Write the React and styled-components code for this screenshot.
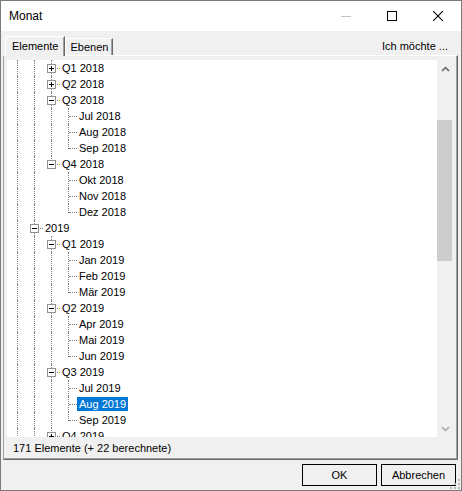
import styled, { createGlobalStyle } from "styled-components";

const UI = `"Liberation Sans", Arial, sans-serif`;

const GlobalStyle = createGlobalStyle`
  * { box-sizing: border-box; }
  body { margin: 0; background: #fff; font-family: ${UI}; }
`;

const Window = styled.div`
  position: relative;
  width: 462px;
  height: 491px;
  border: 1px solid #7a7a7a;
  background: #f0f0f0;
  display: flex;
  flex-direction: column;
  font-family: ${UI};
  color: #000;
  overflow: hidden;
`;

const TitleBar = styled.div`
  height: 30px;
  flex: none;
  background: #fff;
  display: flex;
  align-items: center;
`;

const Title = styled.div`
  flex: 1;
  padding-left: 8px;
  font-size: 12px;
`;

const CaptionButton = styled.div`
  width: 46px;
  height: 30px;
  display: flex;
  align-items: center;
  justify-content: center;
`;

const Body = styled.div`
  flex: 1;
  display: flex;
  flex-direction: column;
  padding: 5px 3px 0 2px;
  min-height: 0;
`;

const TabStrip = styled.div`
  height: 19px;
  flex: none;
  display: flex;
  align-items: flex-end;
  padding-left: 2px;
  font-size: 11px;
`;

const Tab = styled.div`
  position: relative;
  z-index: 1;
  height: ${(p) => (p.$active ? "20px" : "17px")};
  margin-bottom: ${(p) => (p.$active ? "-1px" : "0")};
  padding: ${(p) => (p.$active ? "3px 6px 0" : "2px 4px 0")};
  background: #f0f0f0;
  border-top: 1px solid #fff;
  border-left: 1px solid #fff;
  border-right: 1px solid #696969;
  box-shadow: inset -1px 0 #a0a0a0;
  line-height: 13px;
`;

const Action = styled.div`
  margin-left: auto;
  align-self: center;
  padding-right: 10px;
  padding-top: 1px;
`;

const Panel = styled.div`
  flex: 1;
  display: flex;
  flex-direction: column;
  padding: 4px 3px 0 3px;
  border-top: 1px solid #fff;
  border-left: 1px solid #a0a0a0;
  border-right: 1px solid #696969;
  border-bottom: 1px solid #696969;
  box-shadow: inset -1px -1px #a0a0a0;
  min-height: 0;
`;

const TreeBox = styled.div`
  height: 377px;
  flex: none;
  display: flex;
`;

const Tree = styled.div`
  flex: 1;
  background: #fff;
  overflow: hidden;
  padding-left: 2px;
`;

const Row = styled.div`
  display: flex;
  height: 16px;
  font-size: 11px;
`;

const Cell = styled.span`
  position: relative;
  width: 17px;
  height: 16px;
  flex: none;
  &::before {
    content: "";
    position: absolute;
    left: 8px;
    top: 0;
    height: ${(p) => (p.$v === "full" ? "16px" : p.$v === "half" ? "9px" : "0")};
    border-left: ${(p) => (p.$v === "none" ? "none" : "1px dotted #808080")};
  }
  &::after {
    content: "";
    position: absolute;
    left: 9px;
    top: 8px;
    width: 8px;
    border-top: ${(p) => (p.$h ? "1px dotted #808080" : "none")};
  }
`;

const Expander = styled.span`
  position: absolute;
  left: 4px;
  top: 4px;
  width: 9px;
  height: 9px;
  border: 1px solid #919191;
  background: #fff;
  z-index: 1;
  &::before {
    content: "";
    position: absolute;
    left: 1px;
    top: 3px;
    width: 5px;
    height: 1px;
    background: #000;
  }
  &::after {
    content: "";
    position: absolute;
    left: 3px;
    top: 1px;
    width: 1px;
    height: 5px;
    background: #000;
    display: ${(p) => (p.$open ? "none" : "block")};
  }
`;

const Label = styled.span`
  margin-top: 1px;
  height: 14px;
  line-height: 14px;
  padding: 0 2px;
  white-space: nowrap;
  background: ${(p) => (p.$selected ? "#0078d7" : "transparent")};
  color: ${(p) => (p.$selected ? "#fff" : "#000")};
`;

const ScrollBar = styled.div`
  width: 17px;
  flex: none;
  background: #f0f0f0;
  display: flex;
  flex-direction: column;
`;

const ScrollArrow = styled.div`
  height: 17px;
  flex: none;
  display: flex;
  align-items: center;
  justify-content: center;
`;

const ScrollTrack = styled.div`
  flex: 1;
  padding-top: 43px;
`;

const ScrollThumb = styled.div`
  width: 15px;
  height: 141px;
  background: #cdcdcd;
`;

const Status = styled.div`
  flex: 1;
  display: flex;
  align-items: center;
  padding-left: 6px;
  font-size: 11px;
`;

const Footer = styled.div`
  position: relative;
  height: 30px;
  flex: none;
  display: flex;
  justify-content: flex-end;
  gap: 4px;
  padding: 4px 5px 0 0;
`;

const Button = styled.button`
  width: 75px;
  height: 22px;
  border: 1px solid #000;
  background: #f0f0f0;
  font-family: ${UI};
  font-size: 11px;
  color: #000;
  padding: 0;
`;

const Grip = styled.svg`
  position: absolute;
  right: 1px;
  bottom: 1px;
`;

const y = (label) => ({ label, depth: 1, last: false, box: "open", guides: [true] });
const q = (label, last, box) => ({ label, depth: 2, last, box, guides: [true, true] });
const m = (label, last, qLast, selected) => ({
  label,
  depth: 3,
  last,
  guides: [true, true, !qLast],
  selected,
});

const rows = [
  q("Q1 2018", false, "closed"),
  q("Q2 2018", false, "closed"),
  q("Q3 2018", false, "open"),
  m("Jul 2018", false, false),
  m("Aug 2018", false, false),
  m("Sep 2018", true, false),
  q("Q4 2018", true, "open"),
  m("Okt 2018", false, true),
  m("Nov 2018", false, true),
  m("Dez 2018", true, true),
  y("2019"),
  q("Q1 2019", false, "open"),
  m("Jan 2019", false, false),
  m("Feb 2019", false, false),
  m("Mär 2019", true, false),
  q("Q2 2019", false, "open"),
  m("Apr 2019", false, false),
  m("Mai 2019", false, false),
  m("Jun 2019", true, false),
  q("Q3 2019", false, "open"),
  m("Jul 2019", false, false),
  m("Aug 2019", false, false, true),
  m("Sep 2019", true, false),
  q("Q4 2019", true, "closed"),
];

const TreeRow = ({ row }) => (
  <Row>
    <Cell $v="full" />
    {row.guides.slice(1).map((g, i) => (
      <Cell key={i} $v={g ? "full" : "none"} />
    ))}
    <Cell $v={row.last ? "half" : "full"} $h>
      {row.box && <Expander $open={row.box === "open"} />}
    </Cell>
    <Label $selected={row.selected}>{row.label}</Label>
  </Row>
);

const Chevron = ({ up, color }) => (
  <svg width="9" height="6" viewBox="0 0 9 6">
    <polyline
      points={up ? "1,5 4.5,1.5 8,5" : "1,1 4.5,4.5 8,1"}
      fill="none"
      stroke={color}
      strokeWidth="1.5"
    />
  </svg>
);

const App = () => {
  return (
    <>
      <GlobalStyle />
      <Window>
        <TitleBar>
          <Title>Monat</Title>
          <CaptionButton>
            <svg width="10" height="10" viewBox="0 0 10 10">
              <line x1="0" y1="5.5" x2="10" y2="5.5" stroke="#c4c4c4" />
            </svg>
          </CaptionButton>
          <CaptionButton>
            <svg width="10" height="10" viewBox="0 0 10 10">
              <rect x="0.5" y="0.5" width="9" height="9" fill="none" stroke="#000" />
            </svg>
          </CaptionButton>
          <CaptionButton>
            <svg width="10" height="10" viewBox="0 0 10 10">
              <path d="M0 0 L10 10 M10 0 L0 10" stroke="#000" strokeWidth="1.1" />
            </svg>
          </CaptionButton>
        </TitleBar>
        <Body>
          <TabStrip>
            <Tab $active>Elemente</Tab>
            <Tab>Ebenen</Tab>
            <Action>Ich möchte ...</Action>
          </TabStrip>
          <Panel>
            <TreeBox>
              <Tree>
                {rows.map((r) => (
                  <TreeRow key={r.label} row={r} />
                ))}
              </Tree>
              <ScrollBar>
                <ScrollArrow>
                  <Chevron up color="#606060" />
                </ScrollArrow>
                <ScrollTrack>
                  <ScrollThumb />
                </ScrollTrack>
                <ScrollArrow>
                  <Chevron color="#a3a3a3" />
                </ScrollArrow>
              </ScrollBar>
            </TreeBox>
            <Status>171 Elemente (+ 22 berechnete)</Status>
          </Panel>
        </Body>
        <Footer>
          <Button>OK</Button>
          <Button>Abbrechen</Button>
          <Grip width="10" height="10" viewBox="0 0 10 10">
            <rect x="8" y="0" width="2" height="2" fill="#b8b8b8" />
            <rect x="4" y="4" width="2" height="2" fill="#b8b8b8" />
            <rect x="8" y="4" width="2" height="2" fill="#b8b8b8" />
            <rect x="0" y="8" width="2" height="2" fill="#b8b8b8" />
            <rect x="4" y="8" width="2" height="2" fill="#b8b8b8" />
            <rect x="8" y="8" width="2" height="2" fill="#b8b8b8" />
          </Grip>
        </Footer>
      </Window>
    </>
  );
};

export default App;
